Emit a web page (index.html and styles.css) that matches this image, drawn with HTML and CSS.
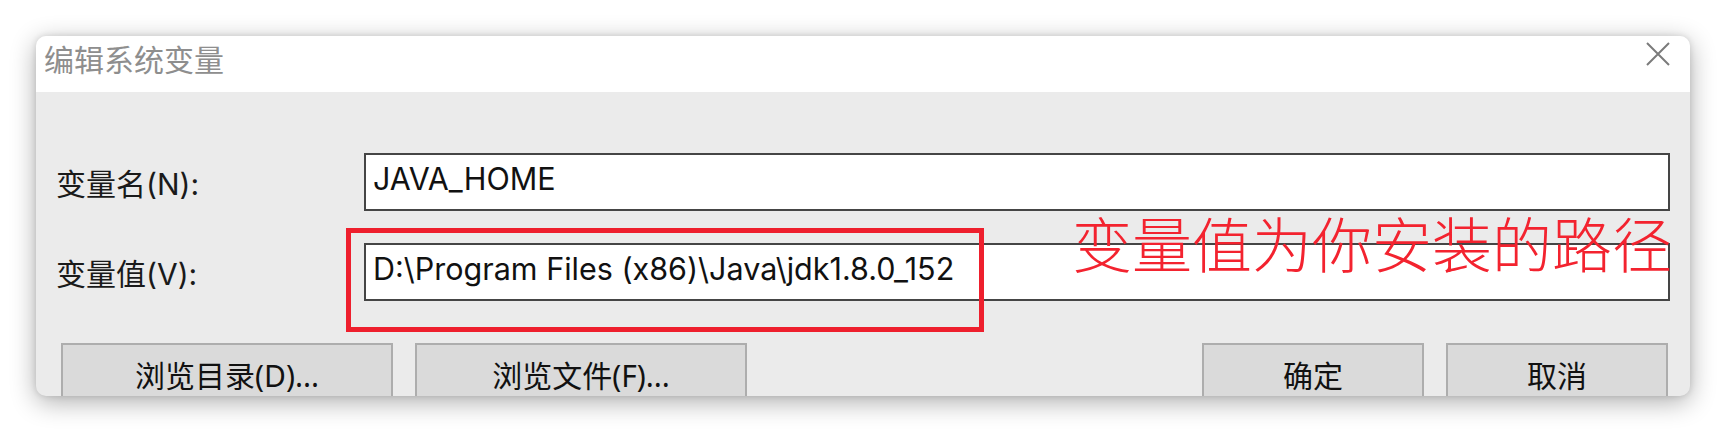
FILE: index.html
```html
<!DOCTYPE html>
<html lang="zh-CN">
<head>
<meta charset="utf-8">
<title>编辑系统变量</title>
<link rel="stylesheet" href="styles.css">
</head>
<body>
<div class="stage">
  <div class="window">
    <div class="titlebar">
      <div class="title">编辑系统变量</div>
      <svg class="close" width="24" height="24" viewBox="0 0 24 24"><path d="M1 1 L23 23 M23 1 L1 23" stroke="#7b7b7b" stroke-width="2" fill="none"/></svg>
    </div>
    <div class="content">
      <div class="fields">
        <label class="label">变量名(N):</label>
        <div class="input">JAVA_HOME</div>
        <label class="label">变量值(V):</label>
        <div class="input">D:\Program Files (x86)\Java\jdk1.8.0_152</div>
      </div>
      <div class="buttons">
        <div class="group">
          <div class="btn wide">浏览目录(D)...</div>
          <div class="btn wide">浏览文件(F)...</div>
        </div>
        <div class="group">
          <div class="btn">确定</div>
          <div class="btn">取消</div>
        </div>
      </div>
    </div>
    <div class="mark-box"></div>
    <div class="mark-text">变量值为你安装的路径</div>
  </div>
</div>
</body>
</html>
```
FILE: styles.css
```css
html, body {
  margin: 0;
  padding: 0;
  background: #ffffff;
}
body {
  width: 1726px;
  height: 432px;
  overflow: hidden;
  font-family: "Noto Sans", "Noto Sans CJK SC", sans-serif;
}
.stage {
  padding: 36px 0 0 36px;
}
.window {
  position: relative;
  width: 1654px;
  height: 360px;
  border-radius: 10px;
  overflow: hidden;
  background: #ebebeb;
  box-shadow: 0 6px 26px rgba(0, 0, 0, 0.32), 0 0 6px rgba(0, 0, 0, 0.12);
}
.titlebar {
  height: 56px;
  background: #ffffff;
  display: flex;
  justify-content: space-between;
  align-items: flex-start;
}
.title {
  margin: 0 0 0 8px;
  font-size: 30px;
  line-height: 44px;
  color: #8e8e8e;
  font-family: "Noto Sans CJK SC", sans-serif;
}
.close {
  margin: 6px 20px 0 0;
}
.content {
  padding: 61px 20px 0 20px;
}
.fields {
  display: grid;
  grid-template-columns: 308px 1fr;
  row-gap: 32px;
  align-items: center;
}
.label {
  font-family: "Inter", "Noto Sans CJK SC", sans-serif;
  font-size: 30px;
  line-height: 36px;
  color: #1a1a1a;
  padding-top: 4px;
}
.input {
  height: 58px;
  box-sizing: border-box;
  border: 2px solid #454545;
  background: #ffffff;
  padding-left: 7px;
  font-family: "Inter", "Noto Sans CJK SC", sans-serif;
  font-size: 30.5px;
  line-height: 48px;
  color: #111;
  white-space: nowrap;
}
.buttons {
  display: flex;
  justify-content: space-between;
  margin-top: 42px;
  padding: 0 2px 0 5px;
}
.group {
  display: flex;
  gap: 22px;
}
.btn {
  width: 222px;
  height: 66px;
  box-sizing: border-box;
  border: 2px solid #adadad;
  background: #dadada;
  font-size: 30px;
  line-height: 62px;
  text-align: center;
  color: #111;
}
.btn.wide {
  width: 332px;
}
.mark-box {
  position: absolute;
  left: 310px;
  top: 192px;
  width: 638px;
  height: 104px;
  box-sizing: border-box;
  border: 5px solid #ee1f2d;
}
.mark-text {
  position: absolute;
  left: 1036px;
  top: 176px;
  font-size: 60px;
  line-height: 60px;
  font-weight: 300;
  color: #f3232f;
  font-family: "Noto Sans CJK SC", sans-serif;
  white-space: nowrap;
}
```
